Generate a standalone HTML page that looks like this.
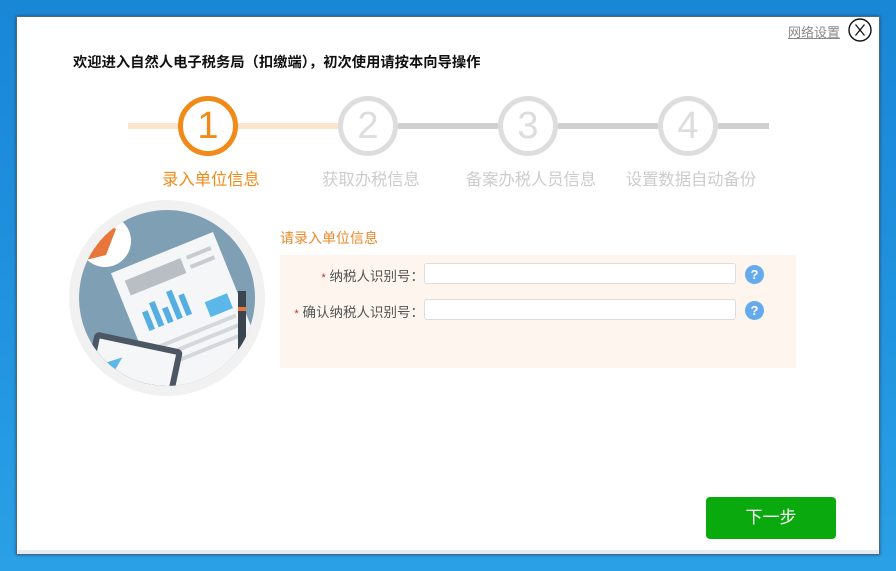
<!DOCTYPE html>
<html><head><meta charset="utf-8"><style>
*{margin:0;padding:0;box-sizing:border-box}
body{width:896px;height:571px;overflow:hidden;position:relative;font-family:"Liberation Sans","Noto Sans CJK SC",sans-serif;background:linear-gradient(180deg,#1a86d6 0%,#1f8fdc 40%,#2aa0e6 100%)}
.win{position:absolute;left:16px;top:16px;width:864px;height:539px;background:#fff;border:1px solid #4a6a86;box-shadow:0 0 3px rgba(0,0,0,.4)}
.foot{position:absolute;left:0;right:0;bottom:0;height:4px;background:#e6eaf0}
.abs{position:absolute}
.title{left:56px;top:34px;font-size:14.3px;font-weight:bold;color:#111;white-space:nowrap}
.net{left:771px;top:5px;font-size:13px;color:#888;text-decoration:underline}
.close{left:831px;top:1px;width:24px;height:24px;border:1.5px solid #111;border-radius:50%}
.line{top:106px;height:6px}
.c{top:79px;width:60px;height:60px;border-radius:50%;border:5px solid #ddd;background:#fff;color:#ddd;font-size:38px;text-align:center;line-height:50px}
.lbl{top:149px;font-size:16.3px;color:#ccc;width:170px;text-align:center;white-space:nowrap}
.sub{left:263px;top:211px;font-size:14px;color:#e8892a}
.panel{left:263px;top:238px;width:516px;height:113px;background:#fdf5ee}
.fl{font-size:13.5px;color:#555;text-align:right;width:145px;white-space:nowrap}
.fl b{color:#d22;font-weight:normal;font-size:11px}
.inp{width:312px;height:21px;background:#fff;border:1px solid #ddd;border-radius:3px}
.q{width:19px;height:19px;border-radius:50%;background:#66aaee;color:#fff;font-weight:bold;font-size:13px;text-align:center;line-height:19px}
.btn{left:689px;top:480px;width:130px;height:42px;background:#0aaa0f;border-radius:4px;color:#fff;font-size:17px;text-align:center;line-height:42px}
</style></head><body>
<div class="win">
<div class="abs title">欢迎进入自然人电子税务局（扣缴端），初次使用请按本向导操作</div>
<div class="abs net">网络设置</div>
<svg class="abs" style="left:831px;top:1px" width="24" height="24" viewBox="0 0 24 24"><circle cx="12" cy="12" r="11" fill="#fff" stroke="#111" stroke-width="1.4"/><path d="M7.5 6.5 L16.5 17.5 M16.5 6.5 L7.5 17.5" stroke="#111" stroke-width="1.3"/></svg>
<div class="abs line" style="left:111px;width:211px;background:#fde4cc"></div>
<div class="abs line" style="left:322px;width:430px;background:#d0d0d0"></div>
<div class="abs c" style="left:161px;border-color:#f08a18;color:#f08a18">1</div>
<div class="abs c" style="left:321px">2</div>
<div class="abs c" style="left:481px">3</div>
<div class="abs c" style="left:641px">4</div>
<div class="abs lbl" style="left:109px;color:#f08a18">录入单位信息</div>
<div class="abs lbl" style="left:269px">获取办税信息</div>
<div class="abs lbl" style="left:429px">备案办税人员信息</div>
<div class="abs lbl" style="left:589px">设置数据自动备份</div>
<svg class="abs" style="left:51px;top:182px" width="198" height="198" viewBox="0 0 198 198">
<defs><clipPath id="cp"><circle cx="99" cy="99" r="88"/></clipPath></defs>
<circle cx="99" cy="99" r="98" fill="#f1f1f1"/>
<circle cx="99" cy="99" r="88" fill="#7f9fb5"/>
<g clip-path="url(#cp)">
<circle cx="37" cy="42" r="26" fill="#fff"/>
<path d="M14 62 A24 24 0 0 1 48 30 L38 56 Z" fill="#e8753a"/>
<g transform="rotate(-22 120 110)">
<rect x="62" y="48" width="110" height="140" fill="#f4f6f8"/>
<rect x="72" y="60" width="60" height="16" fill="#b8bec4"/>
<rect x="138" y="60" width="26" height="4" fill="#c8ccd0"/>
<rect x="138" y="70" width="26" height="4" fill="#c8ccd0"/>
<rect x="76" y="96" width="6" height="20" fill="#55aee0"/><rect x="86" y="90" width="6" height="26" fill="#55aee0"/><rect x="96" y="100" width="6" height="16" fill="#55aee0"/><rect x="106" y="86" width="6" height="30" fill="#55aee0"/><rect x="116" y="94" width="6" height="22" fill="#55aee0"/>
<rect x="138" y="110" width="24" height="16" fill="#5bb6ea"/>
<rect x="72" y="132" width="90" height="4" fill="#d4d8dc"/><rect x="72" y="142" width="90" height="4" fill="#d4d8dc"/><rect x="72" y="152" width="90" height="4" fill="#d4d8dc"/>
</g>
<rect x="170" y="92" width="8" height="80" fill="#3b4550"/><rect x="170" y="108" width="8" height="4" fill="#e8753a"/>
<g transform="rotate(12 60 170)"><rect x="20" y="140" width="90" height="70" rx="5" fill="#4c5763"/><rect x="26" y="146" width="78" height="60" fill="#f4f6f8"/><path d="M34 170 L52 160 L46 178 Z" fill="#5bb6ea"/></g>
</g>
</svg>
<div class="abs sub">请录入单位信息</div>
<div class="abs panel"></div>
<div class="abs fl" style="left:262px;top:248px"><b>*</b> 纳税人识别号：</div>
<div class="abs inp" style="left:407px;top:246px"></div>
<div class="abs q" style="left:728px;top:248px">?</div>
<div class="abs fl" style="left:262px;top:284px"><b>*</b> 确认纳税人识别号：</div>
<div class="abs inp" style="left:407px;top:282px"></div>
<div class="abs q" style="left:728px;top:284px">?</div>
<div class="abs btn">下一步</div>
<div class="foot"></div>
</div>
</body></html>
